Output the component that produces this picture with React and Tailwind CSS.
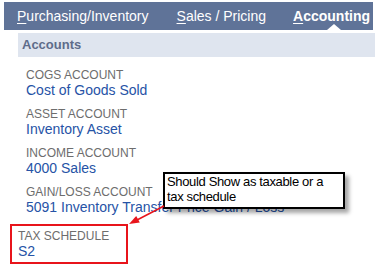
import React from "react";

function Field({ label, value }) {
  return (
    <div className="flex flex-col">
      <div className="text-[12px] leading-[14px] text-[#6d6d6d] uppercase whitespace-nowrap">{label}</div>
      <div className="text-[14px] leading-[16px] text-[#2653a6] whitespace-nowrap">{value}</div>
    </div>
  );
}

export default function App() {
  return (
    <div
      className="relative w-[375px] h-[267px] bg-white overflow-hidden"
      style={{ fontFamily: '"Liberation Sans", Arial, sans-serif' }}
    >
      {/* Tab bar */}
      <div className="ml-[4px] mt-[2px] w-[369px] h-[28px] bg-[#5f7398] flex items-center pl-[13px] text-[14px] text-white">
        <span className="whitespace-nowrap"><u className="underline-offset-2">P</u>urchasing/Inventory</span>
        <span className="ml-[28px] whitespace-nowrap"><u className="underline-offset-2">S</u>ales / Pricing</span>
        <span className="relative ml-[27px] font-bold whitespace-nowrap self-stretch flex items-center">
          <span><u className="underline-offset-2">A</u>ccounting</span>
          <span className="absolute bottom-0 left-[34px] w-0 h-0 border-l-[7px] border-r-[7px] border-b-[6px] border-l-transparent border-r-transparent border-b-white" />
        </span>
      </div>

      {/* Section header */}
      <div className="ml-[18px] mt-[3px] h-[24px] bg-[#dfe5ef] flex items-center pl-[4px] text-[13px] font-bold text-[#5e6c8a]">
        Accounts
      </div>

      {/* Fields */}
      <div className="ml-[26px] mt-[11px] flex flex-col gap-[9px]">
        <Field label="COGS Account" value="Cost of Goods Sold" />
        <Field label="Asset Account" value="Inventory Asset" />
        <Field label="Income Account" value="4000 Sales" />
        <Field label="Gain/Loss Account" value="5091 Inventory Transfer Price Gain / Loss" />
      </div>

      {/* Highlighted tax schedule */}
      <div className="ml-[10px] mt-[9px] w-[118px] border-2 border-[#e8141b] pl-[6px] pt-[3px] pb-[3px]">
        <Field label="Tax Schedule" value="S2" />
      </div>

      {/* Callout */}
      <div className="absolute left-[163px] top-[172px] w-[182px] h-[37px] border-2 border-black bg-white pl-[2px] text-[13px] tracking-[-0.35px] leading-[15px] text-black shadow-[4px_4px_4px_rgba(0,0,0,0.35)]">
        Should Show as taxable or a
        <br />
        tax schedule
      </div>

      {/* Arrow */}
      <svg className="absolute left-0 top-0" width="375" height="267" viewBox="0 0 375 267">
        <line x1="164" y1="206" x2="137" y2="220" stroke="#e8141b" strokeWidth="1.5" />
        <polygon points="129,224 139.8,222.6 136.2,216" fill="#e8141b" />
      </svg>
    </div>
  );
}
